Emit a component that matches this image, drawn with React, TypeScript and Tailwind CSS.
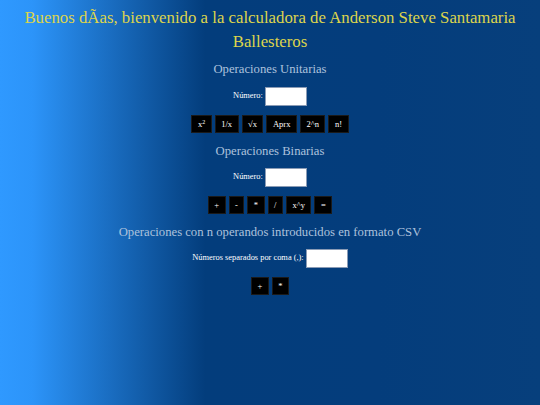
import React from "react";

const serif = { fontFamily: '"Liberation Serif", "Times New Roman", serif' };

function Btn({ children }: { children: React.ReactNode }) {
  return (
    <button className="h-[18px] px-[5.5px] bg-black text-white text-[8.5px] leading-none border border-[#1a1a1a]">
      {children}
    </button>
  );
}

function Field({ label }: { label: string }) {
  return (
    <div className="flex items-center justify-center gap-[2px]">
      <span className="text-white text-[8.4px]">{label}</span>
      <input className="w-[42px] h-[19px] bg-white border border-[#8a9bb5]" />
    </div>
  );
}

export default function App() {
  return (
    <div
      className="w-[540px] h-[405px] bg-[linear-gradient(to_right,#2f99ff_0%,#2c94f9_6%,#033d7c_38%,#043d7c_70%,#073f7c_100%)] text-center"
      style={serif}
    >
      <h1 className="pt-[6px] text-[16.8px] leading-[24px] text-[#dcd44c]">
        Buenos dÃas, bienvenido a la calculadora de Anderson Steve Santamaria Ballesteros
      </h1>
      <h2 className="mt-[7px] text-[12.7px] leading-[16px] text-[#adc2dc]">Operaciones Unitarias</h2>
      <div className="mt-[10px]">
        <Field label="Número:" />
      </div>
      <div className="mt-[9px] flex justify-center gap-[3px]">
        <Btn>
          x<sup className="text-[6px]">2</sup>
        </Btn>
        <Btn>1/x</Btn>
        <Btn>√x</Btn>
        <Btn>Aprx</Btn>
        <Btn>2^n</Btn>
        <Btn>n!</Btn>
      </div>
      <h2 className="mt-[10px] text-[12.7px] leading-[16px] text-[#adc2dc]">Operaciones Binarias</h2>
      <div className="mt-[9px]">
        <Field label="Número:" />
      </div>
      <div className="mt-[9px] flex justify-center gap-[3px]">
        <Btn>+</Btn>
        <Btn>-</Btn>
        <Btn>*</Btn>
        <Btn>/</Btn>
        <Btn>x^y</Btn>
        <Btn>=</Btn>
      </div>
      <h2 className="mt-[10px] text-[12.7px] leading-[16px] text-[#adc2dc]">
        Operaciones con n operandos introducidos en formato CSV
      </h2>
      <div className="mt-[9px]">
        <Field label="Números separados por coma (,):" />
      </div>
      <div className="mt-[9px] flex justify-center gap-[3px]">
        <Btn>+</Btn>
        <Btn>*</Btn>
      </div>
    </div>
  );
}
